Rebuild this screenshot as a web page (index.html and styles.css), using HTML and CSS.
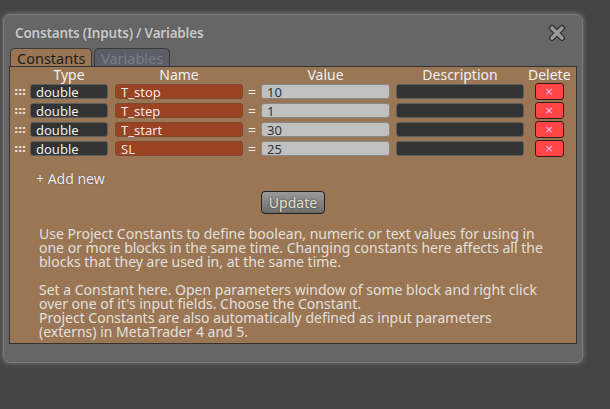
FILE: index.html
```html
<!DOCTYPE html>
<html lang="en">

<head>
    <meta charset="utf-8" />
    <title>Constants (Inputs) / Variables</title>
    <link rel="stylesheet" href="styles.css">
</head>

<body>
    <div class="dialog">
        <div class="titlebar">
            <span class="title">Constants (Inputs) / Variables</span>
            <svg class="close" width="18" height="18" viewBox="0 0 18 18">
                <path d="M4 4 L14 14 M14 4 L4 14" stroke="#2c2c2c" stroke-width="6" stroke-linecap="round" />
                <path d="M4 4 L14 14 M14 4 L4 14" stroke="#9a9a9a" stroke-width="3.6" stroke-linecap="round" />
            </svg>
        </div>
        <div class="tabs">
            <div class="tab active">Constants</div>
            <div class="tab">Variables</div>
        </div>
        <section class="panel">
            <div class="row head">
                <span class="handle"></span>
                <span class="c-type">Type</span>
                <span class="c-name">Name</span>
                <span class="c-eq"></span>
                <span class="c-value">Value</span>
                <span class="c-desc">Description</span>
                <span class="c-del">Delete</span>
            </div>
            <div class="row">
                <span class="handle">:::</span>
                <span class="field c-type type">double</span>
                <span class="field c-name name">T_stop</span>
                <span class="c-eq">=</span>
                <span class="field c-value value">10</span>
                <span class="field c-desc desc"></span>
                <span class="c-del"><button class="del">&times;</button></span>
            </div>
            <div class="row">
                <span class="handle">:::</span>
                <span class="field c-type type">double</span>
                <span class="field c-name name">T_step</span>
                <span class="c-eq">=</span>
                <span class="field c-value value">1</span>
                <span class="field c-desc desc"></span>
                <span class="c-del"><button class="del">&times;</button></span>
            </div>
            <div class="row">
                <span class="handle">:::</span>
                <span class="field c-type type">double</span>
                <span class="field c-name name">T_start</span>
                <span class="c-eq">=</span>
                <span class="field c-value value">30</span>
                <span class="field c-desc desc"></span>
                <span class="c-del"><button class="del">&times;</button></span>
            </div>
            <div class="row">
                <span class="handle">:::</span>
                <span class="field c-type type">double</span>
                <span class="field c-name name">SL</span>
                <span class="c-eq">=</span>
                <span class="field c-value value">25</span>
                <span class="field c-desc desc"></span>
                <span class="c-del"><button class="del">&times;</button></span>
            </div>
            <div class="add">+ Add new</div>
            <div class="actions">
                <button class="update">Update</button>
            </div>
            <div class="help">
                <p>Use Project Constants to define boolean, numeric or text values for using in one or more blocks in the same time. Changing constants here affects all the blocks that they are used in, at the same time.</p>
                <p>Set a Constant here. Open parameters window of some block and right click over one of it's input fields. Choose the Constant.<br>Project Constants are also automatically defined as input parameters (externs) in MetaTrader 4 and 5.</p>
            </div>
        </section>
    </div>
</body>

</html>
```

FILE: styles.css
```css
html,
body {
    margin: 0;
    padding: 0;
}

body {
    background: #444;
    font-family: 'Noto Sans', 'Open Sans', sans-serif;
    font-size: 14px;
    color: #eee;
    height: 409px;
    overflow: hidden;
}

.dialog {
    margin: 14px 0 0 3px;
    width: 580px;
    height: 349px;
    background: #666;
    border: 1px solid #7c7c7c;
    border-radius: 7px;
    box-shadow: 0 0 5px 1px #6e6e6e;
    padding: 0 5px;
    box-sizing: border-box;
}

.titlebar {
    display: flex;
    align-items: center;
    justify-content: space-between;
    height: 33px;
    padding: 0 11px 0 6px;
}

.title {
    font-weight: 600;
    font-size: 13.5px;
    letter-spacing: -0.2px;
    color: #c9c9c9;
    text-shadow: 0 0 1px #555;
    padding-top: 2px;
}

.close {
    margin-top: 2px;
}

.tabs {
    display: flex;
    height: 18px;
    padding-left: 1px;
    gap: 2px;
}

.tab {
    padding: 0 6px;
    line-height: 18px;
    border: 1px solid #3a3a3a;
    border-bottom: none;
    border-radius: 5px 5px 0 0;
    background: #5b5e67;
    color: #7a7d86;
    width: 62px;
    text-align: center;
    font-size: 14.5px;
}

.tab.active {
    background: #9a7655;
    color: #1e1e1e;
    width: 68px;
}

.panel {
    background: #9a7655;
    border: 1px solid #333;
    height: 278px;
    box-sizing: border-box;
}

.row {
    display: flex;
    align-items: center;
    height: 15px;
    margin-bottom: 4px;
    padding-left: 3px;
}

.row.head {
    height: 16px;
    margin-bottom: 1px;
    line-height: 16px;
    color: #f0f0f0;
}

.head span {
    text-align: center;
}

.handle {
    width: 17px;
    color: #e6e6e6;
    font-family: 'DejaVu Sans', sans-serif;
    font-size: 11px;
    font-weight: bold;
    line-height: 15px;
    letter-spacing: -0.5px;
    padding-left: 1px;
    box-sizing: border-box;
}

.field {
    height: 15px;
    line-height: 15px;
    border-radius: 3px;
    box-sizing: border-box;
    border: 1px solid #5e5e5e;
    padding-left: 5px;
    font-size: 13px;
}

.c-type {
    width: 78px;
}

.c-name {
    width: 128px;
    margin-left: 7px;
}

.c-eq {
    width: 18px;
    text-align: center;
    color: #eee;
}

.c-value {
    width: 129px;
}

.c-desc {
    width: 128px;
    margin-left: 6px;
}

.c-del {
    width: 42px;
    margin-left: 4px;
    display: flex;
    justify-content: center;
}

.head .c-del {
    display: block;
}

.type {
    background: #333;
    color: #eee;
}

.name {
    background: #9a4222;
    color: #f2e8e2;
    border-color: #7d4a30;
}

.value {
    background: #c0c0c0;
    color: #333;
    border-color: #888;
}

.desc {
    background: #333;
}

.del {
    width: 29px;
    height: 17px;
    background: #ff4545;
    border: 1px solid #3a1a14;
    border-radius: 3px;
    color: #fbe;
    font-size: 11px;
    line-height: 13px;
    padding: 0;
    font-family: 'DejaVu Sans', sans-serif;
}

.add {
    margin: 13px 0 0 26px;
    color: #f2f2f2;
    text-shadow: 0 0 1px #333;
}

.actions {
    display: flex;
    justify-content: center;
    margin-top: 3px;
}

.update {
    width: 64px;
    height: 23px;
    border: 1px solid #222;
    border-radius: 4px;
    background: linear-gradient(#9a9a9a, #6c6c6c);
    color: #e8e0c8;
    font-family: 'Noto Sans', sans-serif;
    font-size: 14px;
    padding: 0;
    text-shadow: 0 0 2px #333;
}

.help {
    width: 506px;
    margin: 13px 0 0 29px;
    color: #e2e0dc;
    line-height: 14px;
}

.help p {
    margin: 0 0 14px;
}
```
